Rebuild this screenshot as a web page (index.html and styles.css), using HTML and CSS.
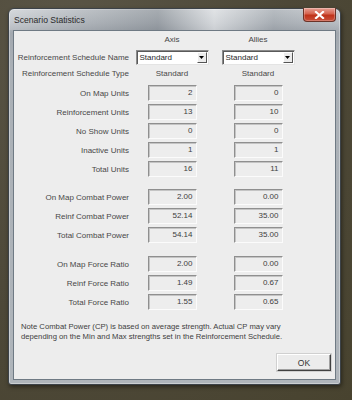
FILE: index.html
```html
<!DOCTYPE html>
<html>
<head>
<meta charset="utf-8">
<link rel="stylesheet" href="styles.css">
</head>
<body>
<div class="desk">
  <div class="window">
    <div class="titlebar">
      <span class="title">Scenario Statistics</span>
      <div class="close"><svg width="11" height="8" viewBox="0 0 11 8"><path d="M2 1 L9 7 M9 1 L2 7" stroke="#fff" stroke-width="2.2" stroke-linecap="square"/></svg></div>
    </div>
    <div class="client">
      <div class="row head">
        <span></span><span class="c">Axis</span><span class="c">Allies</span>
      </div>
      <div class="row name">
        <span class="lbl">Reinforcement Schedule Name</span>
        <div class="c"><div class="combo"><span class="ctext">Standard</span><span class="arrow"><svg width="5" height="3" viewBox="0 0 5 3"><path d="M0 0H5L2.5 3Z" fill="#000"/></svg></span></div></div>
        <div class="c"><div class="combo"><span class="ctext">Standard</span><span class="arrow"><svg width="5" height="3" viewBox="0 0 5 3"><path d="M0 0H5L2.5 3Z" fill="#000"/></svg></span></div></div>
      </div>
      <div class="row type">
        <span class="lbl">Reinforcement Schedule Type</span><span class="c">Standard</span><span class="c">Standard</span>
      </div>

      <div class="group g1">
        <div class="row val"><span class="lbl">On Map Units</span><div class="c"><span class="box">2</span></div><div class="c"><span class="box">0</span></div></div>
        <div class="row val"><span class="lbl">Reinforcement Units</span><div class="c"><span class="box">13</span></div><div class="c"><span class="box">10</span></div></div>
        <div class="row val"><span class="lbl">No Show Units</span><div class="c"><span class="box">0</span></div><div class="c"><span class="box">0</span></div></div>
        <div class="row val"><span class="lbl">Inactive Units</span><div class="c"><span class="box">1</span></div><div class="c"><span class="box">1</span></div></div>
        <div class="row val"><span class="lbl">Total Units</span><div class="c"><span class="box">16</span></div><div class="c"><span class="box">11</span></div></div>
      </div>

      <div class="group g2">
        <div class="row val"><span class="lbl">On Map Combat Power</span><div class="c"><span class="box">2.00</span></div><div class="c"><span class="box">0.00</span></div></div>
        <div class="row val"><span class="lbl">Reinf Combat Power</span><div class="c"><span class="box">52.14</span></div><div class="c"><span class="box">35.00</span></div></div>
        <div class="row val"><span class="lbl">Total Combat Power</span><div class="c"><span class="box">54.14</span></div><div class="c"><span class="box">35.00</span></div></div>
      </div>

      <div class="group g3">
        <div class="row val"><span class="lbl">On Map Force Ratio</span><div class="c"><span class="box">2.00</span></div><div class="c"><span class="box">0.00</span></div></div>
        <div class="row val"><span class="lbl">Reinf Force Ratio</span><div class="c"><span class="box">1.49</span></div><div class="c"><span class="box">0.67</span></div></div>
        <div class="row val"><span class="lbl">Total Force Ratio</span><div class="c"><span class="box">1.55</span></div><div class="c"><span class="box">0.65</span></div></div>
      </div>

      <p class="note">Note Combat Power (CP) is based on average strength. Actual CP may vary<br>depending on the Min and Max strengths set in the Reinforcement Schedule.</p>

      <div class="actions"><button class="ok">OK</button></div>
    </div>
  </div>
</div>
</body>
</html>
```
FILE: styles.css
```css
html, body {
  margin: 0;
  padding: 0;
}
body {
  width: 352px;
  height: 400px;
  background: radial-gradient(ellipse at 20% 10%, #5a5546 0%, #4d4838 55%, #48432f 100%);
  font-family: "Liberation Sans", Arial, sans-serif;
  overflow: hidden;
}
.desk {
  padding: 8px 0 0 8px;
}
.window {
  width: 333px;
  height: 377px;
  box-sizing: border-box;
  border: 1px solid #3c4248;
  border-radius: 6px 6px 3px 3px;
  background: linear-gradient(180deg, #cdd1d5 0px, #b8bdc3 14px, #a2a8af 24px, #aab0b6 60px, #afb5bb 100%);
  box-shadow: 1px 2px 4px rgba(0,0,0,0.45), inset 0 0 0 1px rgba(255,255,255,0.35);
  padding: 0 4px 4px 4px;
  display: flex;
  flex-direction: column;
  position: relative;
}
.titlebar {
  height: 21px;
  display: flex;
  align-items: center;
  position: relative;
  background: linear-gradient(90deg, rgba(255,255,255,0.18) 0%, rgba(70,78,86,0.28) 45%, rgba(255,255,255,0.4) 62%, rgba(90,98,106,0.18) 80%, rgba(255,255,255,0) 100%);
  margin: 0 -4px;
  padding: 0 5px;
  border-radius: 6px 6px 0 0;
}
.title {
  font-family: "Liberation Sans", Arial, sans-serif;
  font-size: 8.6px;
  color: #2a2a2a;
  padding-top: 1px;
}
.close {
  position: absolute;
  right: 4px;
  top: -1px;
  width: 33px;
  height: 14px;
  box-sizing: border-box;
  border: 1px solid #6b3328;
  border-top: none;
  border-radius: 0 0 4px 4px;
  background: linear-gradient(180deg, #e7a196 0%, #d5624d 45%, #bf3219 55%, #c9503a 100%);
  display: flex;
  align-items: center;
  justify-content: center;
  box-shadow: inset 0 0 0 1px rgba(255,255,255,0.25);
}
.client {
  flex: 1;
  background: #ededed;
  border: 1px solid #6f7a84;
  display: flex;
  flex-direction: column;
  font-size: 8px;
  color: #484848;
}
.row {
  display: grid;
  grid-template-columns: 115px 86px 86px;
  align-items: center;
  height: 16px;
}
.lbl {
  text-align: right;
  white-space: nowrap;
}
.c {
  display: flex;
  justify-content: center;
  text-align: center;
}
.name {
  margin-top: 2px;
}
.combo {
  width: 73px;
  height: 15px;
  box-sizing: border-box;
  background: #fff;
  border: 1px solid;
  border-color: #8a8a8a #e4e4e4 #e4e4e4 #8a8a8a;
  box-shadow: inset 1px 1px 0 #5a5a5a;
  display: flex;
  align-items: center;
  justify-content: space-between;
  padding: 1px 1px 1px 3px;
  color: #2a2a2a;
}
.ctext {
  padding-top: 1px;
}
.arrow {
  width: 10px;
  height: 11px;
  box-sizing: border-box;
  background: #ececec;
  border: 1px solid;
  border-color: #fff #555 #555 #fff;
  display: flex;
  align-items: center;
  justify-content: center;
}
.group {
  display: flex;
  flex-direction: column;
  gap: 3px;
}
.g1 { margin-top: 4px; }
.g2 { margin-top: 12px; }
.g3 { margin-top: 13px; }
.box {
  width: 49px;
  height: 16px;
  box-sizing: border-box;
  border: 1px solid;
  border-color: #8f8f8f #fbfbfb #fbfbfb #8f8f8f;
  box-shadow: inset 1px 1px 0 #c4c4c4;
  text-align: right;
  padding: 2px 3px 0 0;
  color: #404040;
}
.note {
  margin: 12px 0 0 7px;
  line-height: 10px;
  font-size: 7.7px;
  color: #404040;
}
.actions {
  display: flex;
  justify-content: flex-end;
  padding-right: 4px;
  margin-top: 12px;
}
.ok {
  width: 54px;
  height: 17px;
  box-sizing: border-box;
  font-family: "Liberation Sans", Arial, sans-serif;
  font-size: 8.5px;
  color: #333;
  background: #ececec;
  border: 1px solid;
  border-color: #fff #404040 #404040 #fff;
  box-shadow: inset -1px -1px 0 #a0a0a0, 0 0 0 1px #d0d0d0;
  padding: 0;
}
```
